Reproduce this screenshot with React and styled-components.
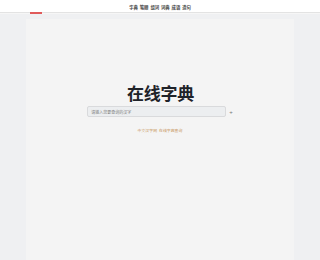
import React from "react";
import styled, { createGlobalStyle } from "styled-components";

const Global = createGlobalStyle`
  html, body { margin: 0; padding: 0; height: 100%; }
  body {
    background: #eff0f2;
    font-family: "Noto Sans CJK SC", "Noto Sans", sans-serif;
    overflow: hidden;
  }
  #root { height: 100%; }
`;

const Page = styled.div`
  height: 260px;
  display: flex;
  flex-direction: column;
`;

const Header = styled.header`
  position: relative;
  height: 12px;
  background: #fff;
  border-bottom: 1px solid #e3e3e3;
  box-shadow: 0 1px 0 #f6f6f6;
  display: flex;
  align-items: center;
  justify-content: center;
  flex-shrink: 0;
`;

const Indicator = styled.span`
  position: absolute;
  left: 30px;
  bottom: -2px;
  width: 12px;
  height: 2px;
  background: #e05a5a;
`;

const Nav = styled.nav`
  display: flex;
  gap: 2px;
  margin-top: 1px;
`;

const NavItem = styled.a`
  font-size: 4.4px;
  line-height: 6px;
  font-weight: 700;
  color: #4a4a4a;
  text-decoration: none;
  letter-spacing: -0.1px;
`;

const Main = styled.main`
  flex: 1;
  margin: 6px 26px 0;
  background: #f4f4f4;
  display: flex;
  flex-direction: column;
  align-items: center;
  padding-top: 64px;
`;

const Title = styled.h1`
  margin: 0;
  font-size: 17px;
  line-height: 20px;
  font-weight: 700;
  color: #1f2329;
  letter-spacing: -0.3px;
  margin-left: 1px;
`;

const SearchRow = styled.div`
  display: flex;
  align-items: center;
  gap: 3px;
  margin-top: 3px;
  margin-left: 0;
`;

const Input = styled.input`
  width: 139px;
  height: 11px;
  box-sizing: border-box;
  border: 1px solid #d9dadc;
  border-radius: 2px;
  background: #eceef0;
  padding: 0 3px;
  font-size: 4px;
  font-family: inherit;
  outline: none;
  &::placeholder { color: #7f7f7f; }
`;

const Plus = styled.span`
  font-size: 6px;
  line-height: 6px;
  color: #777;
  font-family: "Liberation Sans", sans-serif;
`;

const Links = styled.div`
  margin-top: 11px;
  display: flex;
  gap: 2px;
`;

const LinkText = styled.a`
  font-size: 3.9px;
  line-height: 5px;
  color: #c8955a;
  text-decoration: none;
`;

export default function App() {
  return (
    <>
      <Global />
      <Page>
        <Header>
          <Nav>
            {["字典", "笔顺", "组词", "词典", "成语", "造句"].map((t) => (
              <NavItem key={t}>{t}</NavItem>
            ))}
          </Nav>
          <Indicator />
        </Header>
        <Main>
          <Title>在线字典</Title>
          <SearchRow>
            <Input placeholder="请输入您要查询的汉字" />
            <Plus>+</Plus>
          </SearchRow>
          <Links>
            <LinkText>中文汉字网</LinkText>
            <LinkText>在线字典查询</LinkText>
          </Links>
        </Main>
      </Page>
    </>
  );
}
